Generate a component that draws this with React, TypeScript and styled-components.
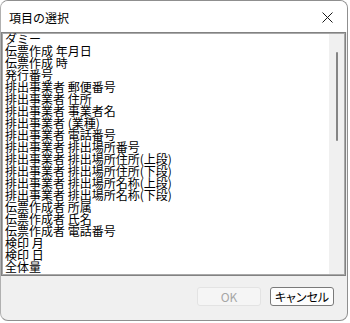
import React from 'react';
import styled, { createGlobalStyle } from 'styled-components';

const GlobalStyle = createGlobalStyle`
    html, body {
        margin: 0;
        padding: 0;
        background: #ffffff;
    }
    body {
        width: 350px;
        height: 323px;
        overflow: hidden;
        font-family: "Noto Sans CJK JP", "Noto Sans", sans-serif;
    }
`;

const items = [
    'ダミー',
    '伝票作成 年月日',
    '伝票作成 時',
    '発行番号',
    '排出事業者 郵便番号',
    '排出事業者 住所',
    '排出事業者 事業者名',
    '排出事業者 (業種)',
    '排出事業者 電話番号',
    '排出事業者 排出場所番号',
    '排出事業者 排出場所住所(上段)',
    '排出事業者 排出場所住所(下段)',
    '排出事業者 排出場所名称(上段)',
    '排出事業者 排出場所名称(下段)',
    '伝票作成者 所属',
    '伝票作成者 氏名',
    '伝票作成者 電話番号',
    '検印 月',
    '検印 日',
    '全体量',
];

const Window = styled.div`
    width: 348px;
    height: 321px;
    box-sizing: border-box;
    border: 1px solid #8f8f8f;
    border-left-color: #b0b0b0;
    border-radius: 8px;
    background: #f0f0f0;
    display: flex;
    flex-direction: column;
    overflow: hidden;
`;

const TitleBar = styled.div`
    height: 31px;
    background: #ffffff;
    display: flex;
    align-items: center;
    justify-content: space-between;
    padding: 0 6px 0 8px;
    flex-shrink: 0;
`;

const Title = styled.div`
    font-size: 12px;
    color: #000000;
    padding-top: 1px;
`;

const CloseButton = styled.div`
    width: 16px;
    height: 16px;
    display: flex;
    align-items: center;
    justify-content: center;
    margin-right: 6px;
    margin-top: 1px;
`;

const ListBox = styled.div`
    height: 244px;
    box-sizing: border-box;
    margin: 0 1px 0 0;
    border: 1px solid #828282;
    box-shadow: inset 0 0 0 1px #a9a9a9;
    background: #ffffff;
    display: flex;
    flex-shrink: 0;
    overflow: hidden;
`;

const ItemList = styled.div`
    flex: 1;
    padding: 0 0 0 3px;
    overflow: hidden;
`;

// rows are 12px high in the original, so the glyphs touch
const Item = styled.div`
    height: 12px;
    line-height: 12px;
    font-size: 12px;
    color: #000000;
    white-space: nowrap;
`;

const ScrollTrack = styled.div`
    width: 15px;
    margin: 1px 1px 1px 0;
    background: #f0f0f0;
    display: flex;
    justify-content: center;
    padding-top: 18px;
    box-sizing: border-box;
`;

const ScrollThumb = styled.div`
    width: 2px;
    height: 89px;
    border-radius: 1px;
    background: #858585;
`;

const Footer = styled.div`
    flex: 1;
    display: flex;
    justify-content: flex-end;
    align-items: flex-start;
    gap: 9px;
    padding: 11px 13px 0 0;
`;

const Button = styled.div<{ $disabled?: boolean }>`
    width: 64px;
    height: 19px;
    box-sizing: border-box;
    border-radius: 3px;
    border: 1px solid ${p => (p.$disabled ? '#e3e3e3' : '#7a7a7a')};
    background: ${p => (p.$disabled ? '#f5f5f5' : '#fdfdfd')};
    color: ${p => (p.$disabled ? '#a6a6a6' : '#000000')};
    font-size: 12px;
    line-height: 17px;
    text-align: center;
    font-feature-settings: "palt";
`;

const CloseIcon = () => (
    <svg width="11" height="11" viewBox="0 0 11 11">
        <path d="M0.5 0.5 L10.5 10.5 M10.5 0.5 L0.5 10.5" stroke="#1a1a1a" strokeWidth="1" fill="none" />
    </svg>
);

const App = () => {
    return (
        <>
            <GlobalStyle />
            <Window>
                <TitleBar>
                    <Title>項目の選択</Title>
                    <CloseButton>
                        <CloseIcon />
                    </CloseButton>
                </TitleBar>
                <ListBox>
                    <ItemList>
                        {items.map(item => (
                            <Item key={item}>{item}</Item>
                        ))}
                    </ItemList>
                    <ScrollTrack>
                        <ScrollThumb />
                    </ScrollTrack>
                </ListBox>
                <Footer>
                    <Button $disabled>OK</Button>
                    <Button>キャンセル</Button>
                </Footer>
            </Window>
        </>
    );
};

export default App;
